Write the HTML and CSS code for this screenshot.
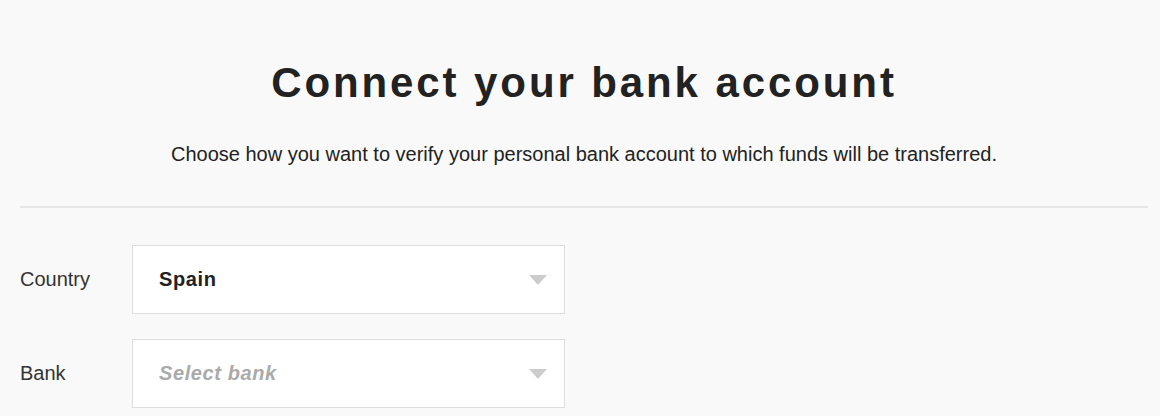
FILE: index.html
```html
<!DOCTYPE html>
<html lang="en">
<head>
    <meta charset="UTF-8">
    <title>Connect your bank account</title>
    <link rel="stylesheet" href="styles.css">
</head>
<body>
    <div class="container">
        <div class="intro">
            <h1>Connect your bank account</h1>
            <p>Choose how you want to verify your personal bank account to which funds will be transferred.</p>
        </div>

        <form class="bank-form">
            <div class="field">
                <label class="field-label">Country</label>
                <div class="select">
                    <span class="select-value">Spain</span>
                    <span class="caret"></span>
                </div>
            </div>
            <div class="field">
                <label class="field-label">Bank</label>
                <div class="select">
                    <span class="select-value placeholder">Select bank</span>
                    <span class="caret"></span>
                </div>
            </div>
        </form>
    </div>
</body>
</html>
```

FILE: styles.css
```css
body {
    margin: 0;
    background: #f9f9f9;
    font-family: "Liberation Sans", Arial, sans-serif;
    color: #333;
}

.container {
    padding: 0 12px 0 20px;
}

.intro {
    text-align: center;
    padding-top: 56px;
    padding-bottom: 40px;
    border-bottom: 2px solid #e6e6e6;
}

h1 {
    margin: 0;
    font-size: 42px;
    line-height: 54px;
    letter-spacing: 2.9px;
    font-weight: bold;
    color: #222;
}

.intro p {
    margin: 32px 0 0;
    font-size: 20px;
    line-height: 24px;
    color: #222;
}

.bank-form {
    padding-top: 37px;
    display: flex;
    flex-direction: column;
    gap: 25px;
}

.field {
    display: flex;
    align-items: center;
}

.field-label {
    width: 112px;
    font-size: 20px;
    color: #333;
}

.select {
    width: 433px;
    height: 69px;
    box-sizing: border-box;
    background: #fff;
    border: 1px solid #ddd;
    display: flex;
    align-items: center;
    justify-content: space-between;
    padding: 0 17px 0 26px;
}

.select-value {
    font-size: 20px;
    font-weight: bold;
    letter-spacing: 0.6px;
    color: #222;
}

.select-value.placeholder {
    font-style: italic;
    color: #aaa;
}

.caret {
    width: 0;
    height: 0;
    border-left: 9px solid transparent;
    border-right: 9px solid transparent;
    border-top: 10px solid #ccc;
}
```
